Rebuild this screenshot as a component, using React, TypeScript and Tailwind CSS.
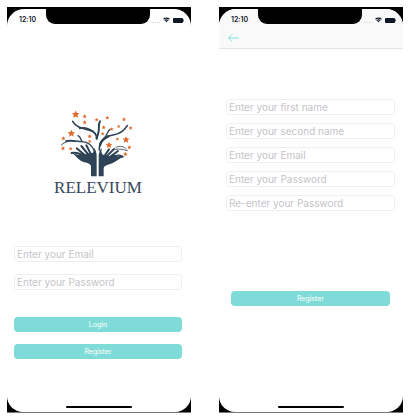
import type { ReactNode } from "react";

const STAR = "M0,-10 L3,-3.6 L10,-3 L4.8,1.8 L6.4,9 L0,5.4 L-6.4,9 L-4.8,1.8 L-10,-3 L-3,-3.6 Z";

const stars: [number, number, number][] = [
  [92, 43, 1.15], [79, 100, 1.1], [243, 119, 1.05], [192, 135, 1],
  [119, 49, 0.6], [119, 67, 0.6], [155, 59, 0.6], [187, 53, 0.6],
  [176, 82, 0.6], [200, 87, 0.55], [221, 79, 0.55], [237, 58, 0.6],
  [257, 84, 0.6], [173, 101, 0.55], [217, 117, 0.55], [253, 142, 0.6],
  [241, 162, 0.65], [55, 115, 0.6], [54, 145, 0.65], [77, 146, 0.55],
  [134, 109, 0.65], [134, 124, 0.55],
];

function Logo() {
  return (
    <svg viewBox="45 30 228 204" className="h-[68px] w-[76px]" role="img" aria-label="Tree held by two hands">
      <g fill="none" stroke="#2f4356" strokeLinecap="round" strokeLinejoin="round">
        <path d="M83,64 C94,84 115,86 137,92 C150,96 155,103 155,116" strokeWidth="5" />
        <path d="M104,86 C115,80 132,86 144,94" strokeWidth="4" />
        <path d="M165,64 C158,76 165,88 159,102 L155,116" strokeWidth="6" />
        <path d="M163,150 C162,120 181,109 204,105 C225,102 238,91 247,77" strokeWidth="5" />
        <path d="M165,136 C168,122 178,114 190,109" strokeWidth="7" />
        <path d="M176,116 C187,106 185,98 195,88" strokeWidth="4" />
        <path d="M62,123 C78,118 94,125 111,125 C130,126 140,134 147,151" strokeWidth="4" />
        <path d="M49,135 C60,124 75,122 91,125" strokeWidth="3" />
        <path d="M99,107 C107,110 107,118 111,125" strokeWidth="4" />
        <path d="M213,142 C225,136 237,139 244,147 M211,148 C223,145 237,149 247,152" strokeWidth="2.5" />
        <path d="M80,159 C94,157 107,161 119,170 M95,145 L123,168 M109,138 L131,165 M124,136 L139,165" strokeWidth="6" />
        <path d="M233,170 C219,163 207,167 193,176 M219,153 L188,176 M207,147 L181,173 M192,148 L174,174" strokeWidth="6" />
      </g>
      <g fill="#2f4356">
        <path d="M77,157 C91,164 104,167 117,164 L137,159 C144,162 148,154 145,143 C152,147 156,159 155,174 L155,229 L138,229 L138,198 C134,188 121,189 109,183 C99,178 91,165 77,157 Z" />
        <path d="M161,229 L161,174 C161,158 166,147 171,145 C167,155 171,165 178,166 L194,169 C207,173 219,167 237,170 C222,174 212,187 198,191 C184,195 176,197 176,206 L176,229 Z" />
      </g>
      <g fill="#e2692c">
        {stars.map(([x, y, s]) => (
          <path key={`${x}-${y}`} d={STAR} transform={`translate(${x} ${y}) scale(${s})`} />
        ))}
      </g>
    </svg>
  );
}

function StatusBar() {
  return (
    <div className="flex h-4 text-gray-900">
      <time className="w-[39px] pt-[7px] pl-3 text-[7px] leading-2 font-semibold">12:10</time>
      <div className="h-[15px] flex-1 rounded-b-[9px] bg-black" />
      <div className="flex w-[41px] items-center gap-[3px] pt-[6px] pl-[2px]">
        <span className="mt-1 w-2 border-b border-dotted border-gray-300" />
        <svg viewBox="0 0 14 10" className="h-[6px] w-[7px]" fill="none" stroke="currentColor" strokeWidth="2.2">
          <path d="M1,3.6 Q7,-1 13,3.6 M3.5,6.2 Q7,3.4 10.5,6.2" />
          <path d="M5,7.5 Q7,6 9,7.5 L7,10 Z" fill="currentColor" stroke="none" />
        </svg>
        <svg viewBox="0 0 11 5" className="h-[5px] w-[11px]" fill="currentColor">
          <rect width="10" height="5" rx="1" />
          <rect x="10.3" y="1.5" width="0.7" height="2" />
        </svg>
      </div>
    </div>
  );
}

function Phone({ header, children }: { header?: ReactNode; children: ReactNode }) {
  return (
    <section className="border-b border-[#777] bg-black pt-[2px]">
      <div className="flex h-full flex-col overflow-hidden rounded-t-[17px] rounded-b-[16px] bg-white">
        <div className={header ? "border-b border-[#e4e4e4] bg-[#f9f9f9]" : ""}>
          <StatusBar />
          {header}
        </div>
        {children}
        <div className="mx-auto mt-auto mb-1 h-[2px] w-[66px] rounded-full bg-black" />
      </div>
    </section>
  );
}

function Field({ label, type = "text" }: { label: string; type?: string }) {
  return (
    <input
      type={type}
      aria-label={label}
      placeholder={label}
      className="block h-4 w-full rounded-[3px] border border-[#efefef] bg-white px-[2px] text-[10px] leading-3 text-gray-700 outline-none placeholder:text-[#c4c4c7]"
    />
  );
}

function Button({ children }: { children: ReactNode }) {
  return (
    <button type="button" className="block h-[15px] w-full rounded-[4px] bg-[#7fdbd7] text-[7px] leading-[15px] text-white">
      {children}
    </button>
  );
}

export default function App() {
  return (
    <main className="grid min-h-screen grid-cols-2 gap-7 bg-white pt-[7px] pr-[6px] pb-[5px] pl-[7px] font-['Inter','Liberation_Sans',sans-serif]">
      <Phone>
        <div className="flex flex-col items-center pt-[85px] pr-[9px] pl-[7px]">
          <Logo />
          <h1 className="font-['Liberation_Serif',serif] text-[17px] leading-5 text-[#34475a]">RELEVIUM</h1>
        </div>
        <form className="pt-12 pr-[9px] pl-[7px]">
          <div className="space-y-3">
            <Field label="Enter your Email" type="email" />
            <Field label="Enter your Password" type="password" />
          </div>
          <div className="space-y-3 pt-[27px]">
            <Button>Login</Button>
            <Button>Register</Button>
          </div>
        </form>
      </Phone>
      <Phone
        header={
          <nav className="h-[23px] pt-2 pl-[9px]">
            <button type="button" aria-label="Back" className="block text-[#7fe3df]">
              <svg viewBox="0 0 20 12" className="h-[10px] w-[11px]" fill="none" stroke="currentColor" strokeWidth="1.8" strokeLinecap="round" strokeLinejoin="round">
                <path d="M19,6 H1 M7,0 L1,6 L7,12" />
              </svg>
            </button>
          </nav>
        }
      >
        <form className="pt-[50px] pr-2 pl-[7px]">
          <div className="space-y-2">
            <Field label="Enter your first name" />
            <Field label="Enter your second name" />
            <Field label="Enter your Email" type="email" />
            <Field label="Enter your Password" type="password" />
            <Field label="Re-enter your Password" type="password" />
          </div>
          <div className="px-[5px] pt-20">
            <Button>Register</Button>
          </div>
        </form>
      </Phone>
    </main>
  );
}
